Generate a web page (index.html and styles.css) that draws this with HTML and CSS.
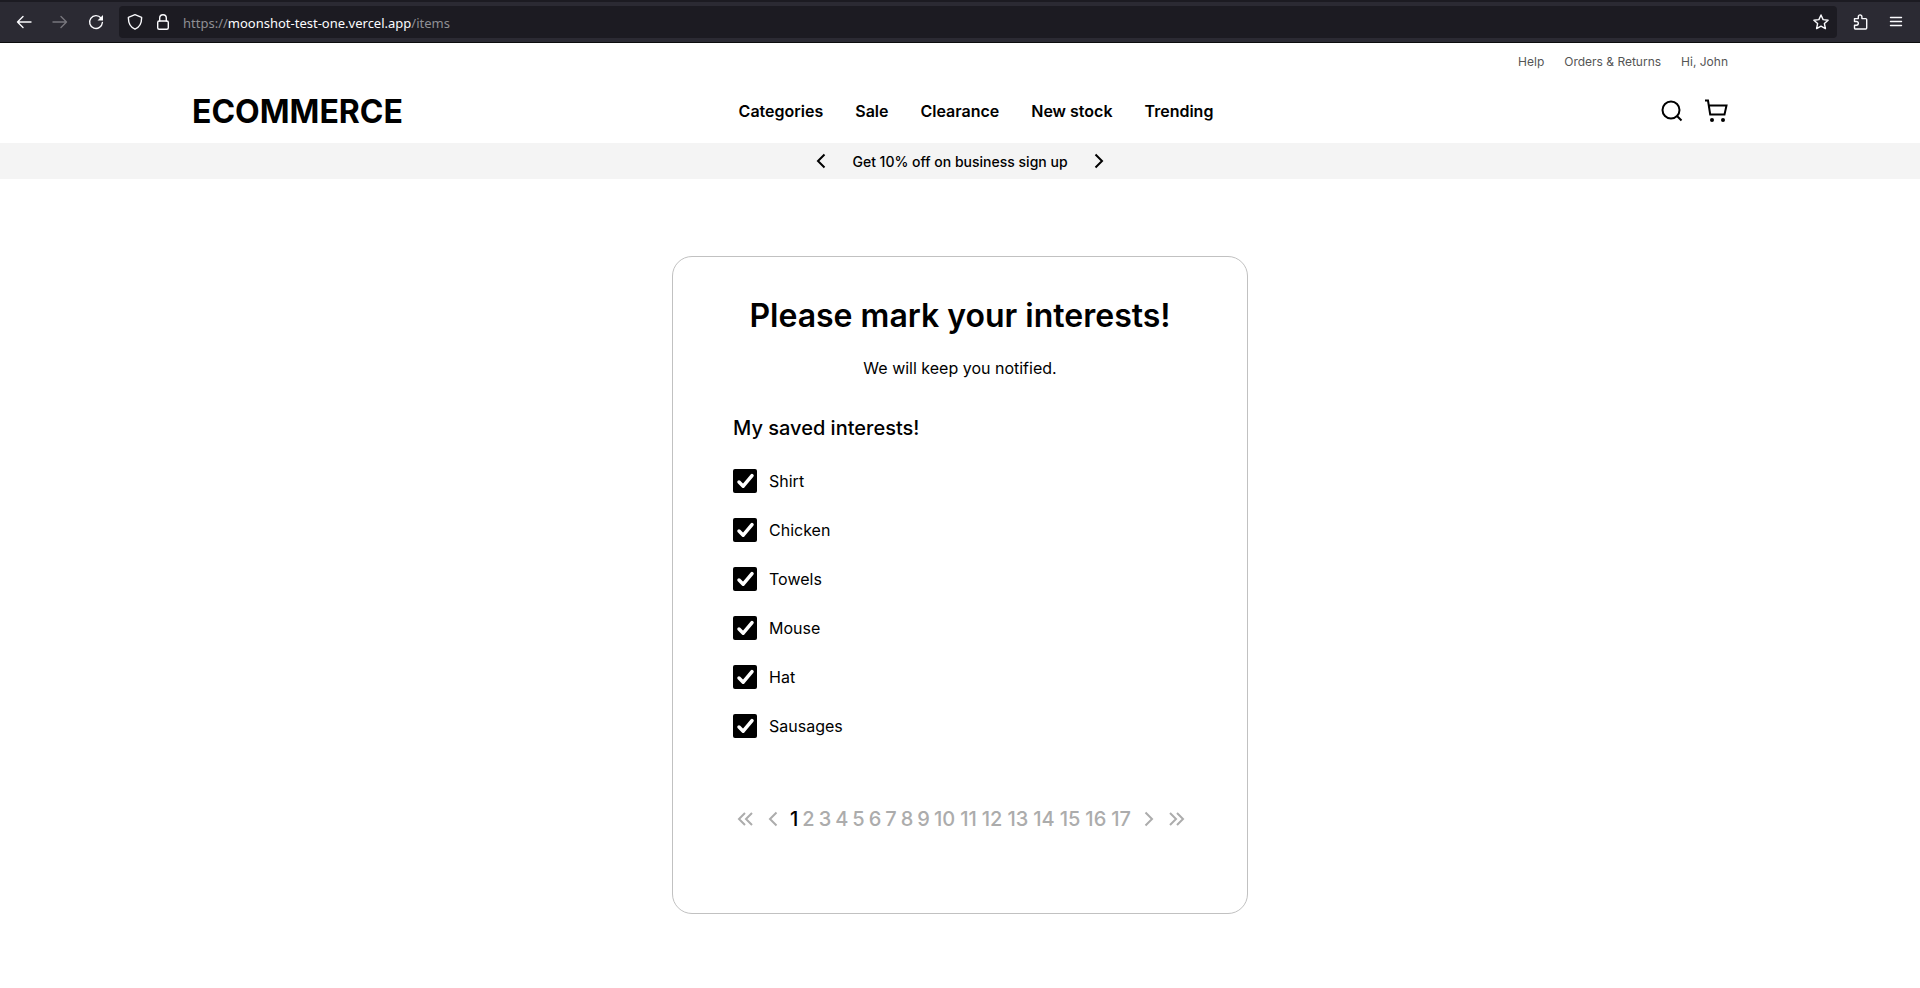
FILE: index.html
```html
<!DOCTYPE html>
<html lang="en">
<head>
<meta charset="utf-8">
<meta name="viewport" content="width=device-width, initial-scale=1">
<title>Interests</title>
<link rel="stylesheet" href="styles.css">
</head>
<body>
<div class="toolbar">
  <div class="toolbar-nav">
    <button class="tool" aria-label="Back"><svg width="16" height="16" viewBox="0 0 16 16"><path d="M15 8H1.500M7 2.500 1.500 8 7 13.500"/></svg></button>
    <button class="tool tool-off" aria-label="Forward" disabled><svg width="16" height="16" viewBox="0 0 16 16"><path d="M1 8h13.500M9 2.500 14.500 8 9 13.500"/></svg></button>
    <button class="tool" aria-label="Reload"><svg width="16" height="16" viewBox="0 0 16 16"><path d="M13 4a6.400 6.400 0 1 0 1.400 4.500"/><path class="solid" d="M15 1v5.500H9.500z"/></svg></button>
  </div>
  <div class="address">
    <svg width="16" height="16" viewBox="0 0 16 16"><path d="M8 0.700 14.600 3.300C14.800 9 12.500 13.300 8 15.200 3.500 13.300 1.200 9 1.400 3.300Z"/></svg>
    <svg width="16" height="16" viewBox="0 0 16 16"><rect x="2.700" y="7" width="10.600" height="8.200" rx="1.500"/><path d="M4.700 7V4a3.300 3.300 0 0 1 6.600 0v3"/></svg>
    <span class="url">https://<b>moonshot-test-one.vercel.app</b>/items</span>
    <button class="tool" aria-label="Bookmark"><svg width="16" height="16" viewBox="0 0 16 16"><path d="m8 1 2.100 4.600 5 .6-3.700 3.400 1 5L8 12.200l-4.400 2.400 1-5L.9 6.200l5-.6z"/></svg></button>
  </div>
  <div class="toolbar-menu">
    <button class="tool" aria-label="Extensions"><svg width="16" height="16" viewBox="0 0 16 16"><path d="M1.500 7.500V4.600h3.800V2.700a1.800 1.800 0 0 1 3.600 0v1.900h3.800a1 1 0 0 1 1 1V14a1 1 0 0 1-1 1H2.500a1 1 0 0 1-1-1v-2.800h2a1.850 1.850 0 0 0 0-3.700z"/></svg></button>
    <button class="tool" aria-label="Menu"><svg width="16" height="16" viewBox="0 0 16 16"><path d="M2.500 3.500h11M2.500 7.500h11M2.500 11.500h11"/></svg></button>
  </div>
</div>

<header class="header">
  <nav class="account" aria-label="Account">
    <a href="#">Help</a>
    <a href="#">Orders &amp; Returns</a>
    <a href="#">Hi, John</a>
  </nav>
  <div class="main-bar">
    <a class="logo" href="#">ECOMMERCE</a>
    <nav class="links" aria-label="Shop">
      <a href="#">Categories</a>
      <a href="#">Sale</a>
      <a href="#">Clearance</a>
      <a href="#">New stock</a>
      <a href="#">Trending</a>
    </nav>
    <div class="actions">
      <button class="icon" aria-label="Search"><svg width="24" height="24" viewBox="0 0 24 24"><circle cx="11" cy="11" r="8.500"/><path d="m17 17 4.500 4.500"/></svg></button>
      <button class="icon" aria-label="Cart"><svg width="24" height="24" viewBox="0 0 24 24"><path d="M1 1.500h3L6.200 15.500H20.500L22.500 6.500H5"/><circle class="wheel" cx="8" cy="21" r="2"/><circle class="wheel" cx="19" cy="21" r="2"/></svg></button>
    </div>
  </div>
</header>

<div class="promo">
  <button class="icon" aria-label="Previous offer"><svg width="24" height="24" viewBox="0 0 24 24"><path d="m15.500 5.500-6.500 6.500 6.500 6.500"/></svg></button>
  <p>Get 10% off on business sign up</p>
  <button class="icon" aria-label="Next offer"><svg width="24" height="24" viewBox="0 0 24 24"><path d="m8.500 5.500 6.500 6.500-6.500 6.500"/></svg></button>
</div>

<main class="page">
  <section class="card">
    <h1>Please mark your interests!</h1>
    <p class="lead">We will keep you notified.</p>
    <h2>My saved interests!</h2>
    <div class="interests">
      <label><input type="checkbox" checked>Shirt</label>
      <label><input type="checkbox" checked>Chicken</label>
      <label><input type="checkbox" checked>Towels</label>
      <label><input type="checkbox" checked>Mouse</label>
      <label><input type="checkbox" checked>Hat</label>
      <label><input type="checkbox" checked>Sausages</label>
    </div>
    <nav class="pager" aria-label="Pages">
      <button class="step" aria-label="First page"><svg width="20" height="20" viewBox="0 0 20 20"><path d="M9 4 3 10l6 6M16 4l-6 6 6 6"/></svg></button>
      <button class="step" aria-label="Previous page"><svg width="20" height="20" viewBox="0 0 20 20"><path d="m13.500 3.500-6.500 6.500 6.500 6.500"/></svg></button>
      <div class="numbers">
        <button class="current" aria-current="page">1</button>
        <button>2</button>
        <button>3</button>
        <button>4</button>
        <button>5</button>
        <button>6</button>
        <button>7</button>
        <button>8</button>
        <button>9</button>
        <button class="wide">10</button>
        <button class="wide">11</button>
        <button class="wide">12</button>
        <button class="wide">13</button>
        <button class="wide">14</button>
        <button class="wide">15</button>
        <button class="wide">16</button>
        <button class="wide">17</button>
      </div>
      <button class="step" aria-label="Next page"><svg width="20" height="20" viewBox="0 0 20 20"><path d="m6.500 3.500 6.500 6.500-6.500 6.500"/></svg></button>
      <button class="step" aria-label="Last page"><svg width="20" height="20" viewBox="0 0 20 20"><path d="m4 4 6 6-6 6M11 4l6 6-6 6"/></svg></button>
    </nav>
  </section>
</main>
</body>
</html>
```
FILE: styles.css
```css
* {
  box-sizing: border-box;
}

body {
  margin: 0;
  background: #fff;
  color: #000;
  font: 400 16px/24px Inter, "Liberation Sans", sans-serif;
}

h1, h2, p {
  margin: 0;
}

a {
  color: inherit;
  text-decoration: none;
}

button {
  padding: 0;
  border: 0;
  background: none;
  color: inherit;
  font: inherit;
}

svg {
  display: block;
  flex: none;
  fill: none;
  stroke: currentColor;
}

/* Browser toolbar */
.toolbar {
  display: flex;
  align-items: center;
  height: 43px;
  border-top: 2px solid #1c1b22;
  border-bottom: 1px solid #0c0c0d;
  background: #2b2a33;
  color: #fbfbfe;
}

.toolbar svg {
  stroke-width: 1.4;
  stroke-linejoin: round;
  stroke-linecap: round;
}

.toolbar-nav {
  display: flex;
  gap: 20px;
  padding: 0 15px 0 16px;
}

.tool-off {
  color: #77767d;
}

.toolbar .solid {
  fill: currentColor;
  stroke: none;
}

.address {
  display: flex;
  flex: 1;
  align-items: center;
  gap: 12px;
  height: 32px;
  padding: 0 8px;
  border-radius: 4px;
  background: #1c1b22;
}

.url {
  flex: 1;
  padding-top: 2px;
  color: #8f8f94;
  font: 13px/20px "Noto Sans", sans-serif;
}

.url b {
  color: #fbfbfe;
  font-weight: 400;
}

.toolbar-menu {
  display: flex;
  gap: 19px;
  padding: 0 16px;
}

/* Site header */
.header {
  padding: 0 10%;
}

.account {
  display: flex;
  justify-content: flex-end;
  gap: 20px;
  padding-top: 2px;
  color: #555;
  font-size: 12px;
  line-height: 34px;
}

.main-bar {
  display: grid;
  grid-template-columns: 1fr auto 1fr;
  align-items: center;
  height: 64px;
}

.logo {
  padding-top: 2px;
  font-size: 32px;
  font-weight: 700;
  line-height: 40px;
}

.links {
  display: flex;
  gap: 32px;
  padding-left: 32px;
  font-weight: 600;
}

.actions {
  display: flex;
  justify-content: flex-end;
  gap: 20px;
}

.icon svg {
  stroke-width: 2;
}

.icon .wheel {
  fill: currentColor;
  stroke: none;
}

.promo {
  display: flex;
  align-items: center;
  justify-content: center;
  gap: 19px;
  height: 36px;
  background: #f4f4f4;
  font-size: 14px;
  font-weight: 500;
}

.promo p {
  padding-top: 2px;
}

/* Interests card */
.page {
  display: flex;
  justify-content: center;
  padding: 77px 24px 72px;
}

.card {
  width: 100%;
  max-width: 576px;
  padding: 39px 60px 82px;
  border: 1px solid #c1c1c1;
  border-radius: 20px;
}

h1 {
  font-size: 32px;
  font-weight: 600;
  line-height: 40px;
  text-align: center;
}

.lead {
  margin-top: 20px;
  text-align: center;
}

h2 {
  margin-top: 36px;
  font-size: 20px;
  font-weight: 500;
  line-height: 24px;
}

.interests {
  display: grid;
  justify-items: start;
  gap: 25px;
  margin-top: 29px;
}

.interests label {
  display: flex;
  align-items: center;
  gap: 12px;
}

.interests input {
  width: 24px;
  height: 24px;
  margin: 0;
  border-radius: 2px;
  appearance: none;
  background: #000 url("data:image/svg+xml,%3Csvg xmlns='http://www.w3.org/2000/svg' viewBox='0 0 24 24'%3E%3Cpath d='m6 13 4.200 4.200L19 6.700' fill='none' stroke='%23fff' stroke-width='3.500' stroke-linecap='round' stroke-linejoin='round'/%3E%3C/svg%3E");
}

.pager {
  display: flex;
  align-items: center;
  gap: 7px;
  margin-top: 69px;
  padding-left: 3px;
  color: #acacac;
}

.step svg {
  stroke-width: 2;
}

.numbers {
  display: flex;
  gap: 4px;
  font-size: 20px;
  font-weight: 500;
}

.current {
  color: #000;
}

.wide {
  padding-right: 1px;
}
```
